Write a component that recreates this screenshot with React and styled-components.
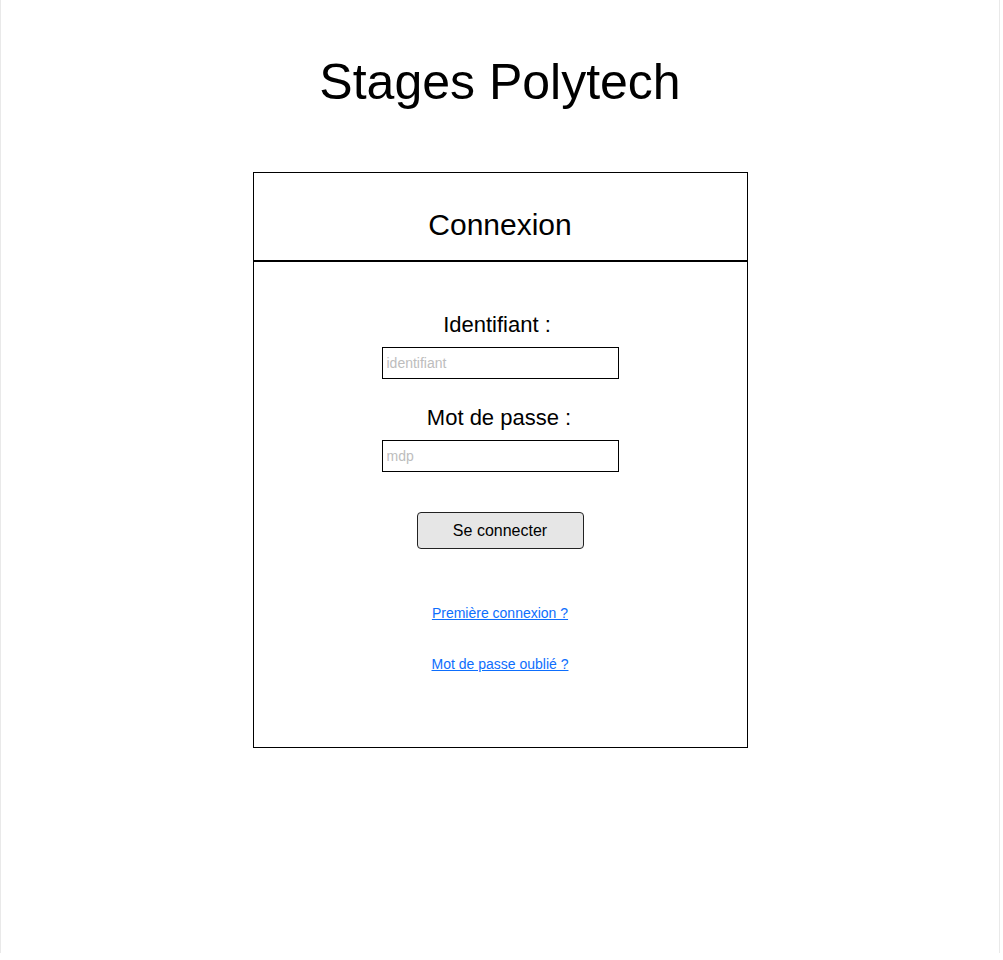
import React from 'react';
import styled, { createGlobalStyle } from 'styled-components';

const GlobalStyle = createGlobalStyle`
	body {
		margin: 0;
		background: #fff;
		font-family: 'Liberation Sans', Arial, sans-serif;
		color: #000;
	}
`;

const App = () => {
	return (
		<>
			<GlobalStyle />
			<Page>
				<Title>Stages Polytech</Title>
				<Card>
					<CardHeader>Connexion</CardHeader>
					<Form onSubmit={(e) => e.preventDefault()}>
						<Label htmlFor="login" $nudge={6}>
							Identifiant :
						</Label>
						<Input id="login" type="text" placeholder="identifiant" />
						<Label htmlFor="pwd" $nudge={2}>
							Mot de passe :
						</Label>
						<Input id="pwd" type="password" placeholder="mdp" />
						<Submit type="submit">Se connecter</Submit>
						<Links>
							<Link href="#">Première connexion ?</Link>
							<Link href="#">Mot de passe oublié ?</Link>
						</Links>
					</Form>
				</Card>
			</Page>
		</>
	);
};

const Page = styled.div`
	box-sizing: border-box;
	width: 1000px;
	height: 953px;
	border-left: 1px solid #e9e9e9;
	border-right: 1px solid #e9e9e9;
	padding-top: 52px;
`;
const Title = styled.h1`
	margin: 0;
	font-size: 50px;
	font-weight: normal;
	line-height: 60px;
	text-align: center;
`;
const Card = styled.div`
	box-sizing: border-box;
	width: 495px;
	margin: 60px auto 0;
	border: 1px solid #000;
`;
const CardHeader = styled.h2`
	margin: 0;
	padding: 34px 0 17px;
	font-size: 30px;
	font-weight: normal;
	line-height: 36px;
	text-align: center;
	border-bottom: 2px solid #000;
`;
const Form = styled.form`
	display: flex;
	flex-direction: column;
	align-items: center;
	padding: 50px 0 75px;
`;
const Label = styled.label`
	font-size: 22px;
	line-height: 26px;
	margin-bottom: 9px;
	padding-right: ${(p) => p.$nudge || 0}px;
`;
const Input = styled.input`
	box-sizing: border-box;
	width: 237px;
	height: 32px;
	margin: 0 0 26px;
	padding: 0 4px;
	border: 1px solid #000;
	border-radius: 0;
	font-family: 'Liberation Sans', Arial, sans-serif;
	font-size: 14px;
	outline: none;
	&::placeholder {
		color: #bdbdbd;
	}
`;
const Submit = styled.button`
	box-sizing: border-box;
	width: 167px;
	height: 37px;
	margin-top: 14px;
	background: #e6e6e6;
	border: 1px solid #222;
	border-radius: 4px;
	font-family: 'Liberation Sans', Arial, sans-serif;
	font-size: 16px;
	color: #000;
	cursor: pointer;
`;
const Links = styled.div`
	display: flex;
	flex-direction: column;
	align-items: center;
	gap: 35px;
	margin-top: 56px;
`;
const Link = styled.a`
	font-size: 14px;
	line-height: 16px;
	color: #0d6efd;
	text-decoration: underline;
`;

export default App;
